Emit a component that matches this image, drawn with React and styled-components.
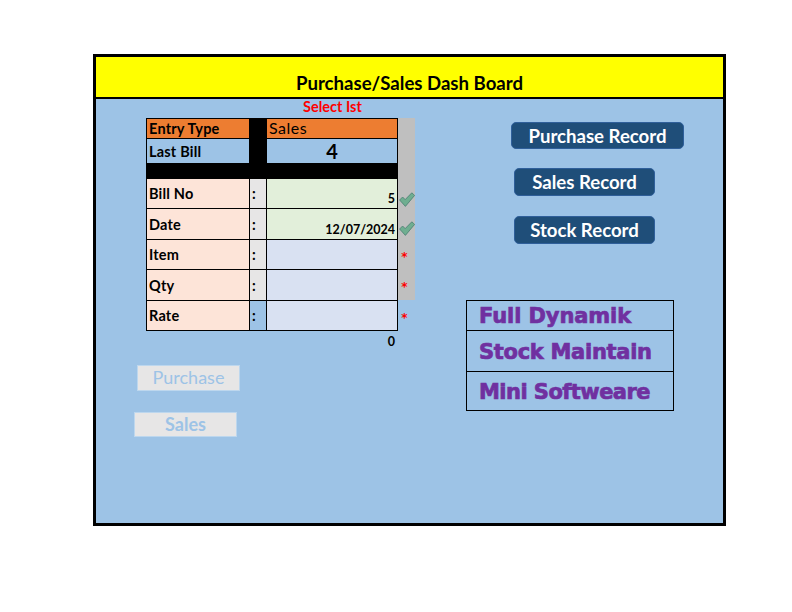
import styled, { createGlobalStyle } from "styled-components";

const GlobalStyle = createGlobalStyle`
  html, body {
    margin: 0;
    padding: 0;
    background: #fff;
    font-family: "Lato", "Liberation Sans", sans-serif;
  }
`;

const Frame = styled.div`
  box-sizing: border-box;
  width: 633px;
  height: 472px;
  margin: 54px 0 0 93px;
  border: 3px solid #000;
  background: #9dc3e6;
  display: flex;
  flex-direction: column;
`;

const Header = styled.div`
  box-sizing: border-box;
  height: 42px;
  background: #ffff00;
  border-bottom: 2px solid #000;
  display: flex;
  justify-content: center;
  align-items: flex-end;
  padding-bottom: 2px;
  font-size: 18.6px;
  font-weight: 700;
  line-height: 24px;
  color: #000;
`;

const Body = styled.div`
  display: flex;
  flex: 1;
`;

const LeftPane = styled.div`
  width: 370px;
  display: flex;
  flex-direction: column;
`;

const SelectNote = styled.div`
  height: 19px;
  margin-left: 207px;
  font-size: 14.5px;
  line-height: 15px;
  font-weight: 700;
  color: #ff0000;
  white-space: nowrap;
`;

const FormRow = styled.div`
  display: flex;
  margin-left: 50px;
`;

const Form = styled.div`
  width: 252px;
  display: grid;
  grid-template-columns: 102px 16px 130px;
  grid-template-rows: 19px 24px 14px 29px 30px 29px 30px 29px;
  gap: 1px;
  padding: 1px;
  box-sizing: border-box;
  background: #000;
`;

const Label = styled.div`
  background: ${({ $bg }) => $bg || "#fde4d8"};
  display: flex;
  align-items: center;
  padding-left: 2px;
  font-size: 14.5px;
  font-weight: 700;
  letter-spacing: 0.2px;
  color: #000;
  white-space: nowrap;
`;

const Colon = styled.div`
  background: ${({ $bg }) => $bg || "#e7e6e6"};
  display: flex;
  align-items: center;
  padding-left: 2px;
  font-size: 14.5px;
  font-weight: 700;
  color: #000;
`;

const Gap = styled.div``;

const BlackBand = styled.div`
  grid-column: 1 / -1;
  background: #000;
`;

const EntryValue = styled.div`
  background: #ed7d31;
  padding-left: 2px;
  font-size: 16px;
  line-height: 18px;
  letter-spacing: 0.5px;
  color: #000;
`;

const BillValue = styled.div`
  background: #9dc3e6;
  text-align: center;
  font-size: 20px;
  font-weight: 700;
  line-height: 24px;
  color: #000;
`;

const Field = styled.div`
  background: ${({ $bg }) => $bg};
  display: flex;
  justify-content: flex-end;
  align-items: flex-end;
  padding: 0 2px 1px 0;
  font-size: 12.5px;
  font-weight: 700;
  line-height: 16px;
  color: #000;
`;

const Marks = styled.div`
  width: 17px;
  display: flex;
  flex-direction: column;
`;

const Strip = styled.div`
  box-sizing: border-box;
  height: 182px;
  padding-top: 60px;
  background: #bfbfbf;
`;

const Mark = styled.div`
  height: ${({ $h }) => $h || 30}px;
  display: flex;
  justify-content: center;
  align-items: ${({ $align }) => $align || "center"};
`;

const Star = styled.span`
  font-family: "DejaVu Sans", sans-serif;
  font-size: 12px;
  font-weight: 700;
  line-height: 13px;
  color: #ff0000;
  margin: 12px 4px 0 0;
`;

const Total = styled.div`
  width: 249px;
  margin: 3px 0 0 50px;
  text-align: right;
  font-size: 12.5px;
  font-weight: 700;
  line-height: 16px;
  color: #000;
`;

const GhostButton = styled.div`
  box-sizing: border-box;
  width: 103px;
  height: ${({ $h }) => $h}px;
  margin: ${({ $top }) => $top}px 0 0 ${({ $left }) => $left}px;
  padding-bottom: ${({ $bold }) => ($bold ? 2 : 3)}px;
  background: #e7e6e6;
  border: 1px solid #bdd7ee;
  display: flex;
  justify-content: center;
  align-items: center;
  font-size: 18px;
  font-weight: ${({ $bold }) => ($bold ? 700 : 400)};
  color: #9dc3e6;
`;

const RightPane = styled.div`
  flex: 1;
  display: flex;
  flex-direction: column;
  align-items: flex-start;
`;

const RecordButton = styled.div`
  box-sizing: border-box;
  width: ${({ $w }) => $w}px;
  height: ${({ $h }) => $h || 28}px;
  margin: ${({ $top }) => $top}px 0 0 ${({ $left }) => $left}px;
  background: #1f4e79;
  border: 1px solid #2f5f9a;
  border-radius: 5px;
  display: flex;
  justify-content: center;
  align-items: center;
  font-size: 18.6px;
  font-weight: 700;
  color: #fff;
  white-space: nowrap;
`;

const InfoBox = styled.div`
  box-sizing: border-box;
  width: 208px;
  margin: 56px 0 0 0;
  border: 1px solid #000;
  display: flex;
  flex-direction: column;
`;

const InfoRow = styled.div`
  box-sizing: border-box;
  height: ${({ $h }) => $h}px;
  padding: 1px 0 0 12px;
  display: flex;
  align-items: center;
  border-top: ${({ $first }) => ($first ? "none" : "1px solid #000")};
  font-family: "DejaVu Sans", sans-serif;
  font-size: 21px;
  font-weight: 700;
  letter-spacing: ${({ $ls }) => $ls}px;
  color: #7030a0;
  -webkit-text-stroke: 0.7px #7030a0;
  white-space: nowrap;
`;

function Check() {
  return (
    <svg width="16" height="15" viewBox="0 0 16 15">
      <path
        d="M0.6 8 L3.6 5 L6.2 7.6 L12.8 0.8 L15.6 3.4 L6.4 14.4 Z"
        fill="#6fae90"
        stroke="#4d7f73"
        strokeWidth="0.8"
        strokeLinejoin="round"
      />
    </svg>
  );
}

export default function App() {
  return (
    <>
      <GlobalStyle />
      <Frame>
        <Header>Purchase/Sales Dash Board</Header>
        <Body>
          <LeftPane>
            <SelectNote>Select Ist</SelectNote>
            <FormRow>
              <Form>
                <Label $bg="#ed7d31">Entry Type</Label>
                <Gap />
                <EntryValue>Sales</EntryValue>

                <Label $bg="#9dc3e6">Last Bill</Label>
                <Gap />
                <BillValue>4</BillValue>

                <BlackBand />

                <Label>Bill No</Label>
                <Colon>:</Colon>
                <Field $bg="#e2efda">5</Field>

                <Label>Date</Label>
                <Colon>:</Colon>
                <Field $bg="#e2efda">12/07/2024</Field>

                <Label>Item</Label>
                <Colon>:</Colon>
                <Field $bg="#d9e1f2" />

                <Label>Qty</Label>
                <Colon>:</Colon>
                <Field $bg="#d9e1f2" />

                <Label>Rate</Label>
                <Colon $bg="#9dc3e6">:</Colon>
                <Field $bg="#d9e1f2" />
              </Form>
              <Marks>
                <Strip>
                  <Mark $h={29} $align="flex-end">
                    <Check />
                  </Mark>
                  <Mark $h={29} $align="flex-end">
                    <Check />
                  </Mark>
                  <Mark>
                    <Star>*</Star>
                  </Mark>
                  <Mark>
                    <Star>*</Star>
                  </Mark>
                </Strip>
                <Mark $h={24}>
                  <Star>*</Star>
                </Mark>
              </Marks>
            </FormRow>
            <Total>0</Total>
            <GhostButton $h={26} $top={15} $left={41}>
              Purchase
            </GhostButton>
            <GhostButton $h={25} $top={21} $left={38} $bold>
              Sales
            </GhostButton>
          </LeftPane>
          <RightPane>
            <RecordButton $w={173} $h={27} $top={23} $left={45}>
              Purchase Record
            </RecordButton>
            <RecordButton $w={141} $top={19} $left={48}>
              Sales Record
            </RecordButton>
            <RecordButton $w={141} $top={20} $left={48}>
              Stock Record
            </RecordButton>
            <InfoBox>
              <InfoRow $first $h={29} $ls={-0.1}>
                Full Dynamik
              </InfoRow>
              <InfoRow $h={41} $ls={-0.3}>
                Stock Maintain
              </InfoRow>
              <InfoRow $h={39} $ls={-0.55}>
                Mini Softweare
              </InfoRow>
            </InfoBox>
          </RightPane>
        </Body>
      </Frame>
    </>
  );
}
